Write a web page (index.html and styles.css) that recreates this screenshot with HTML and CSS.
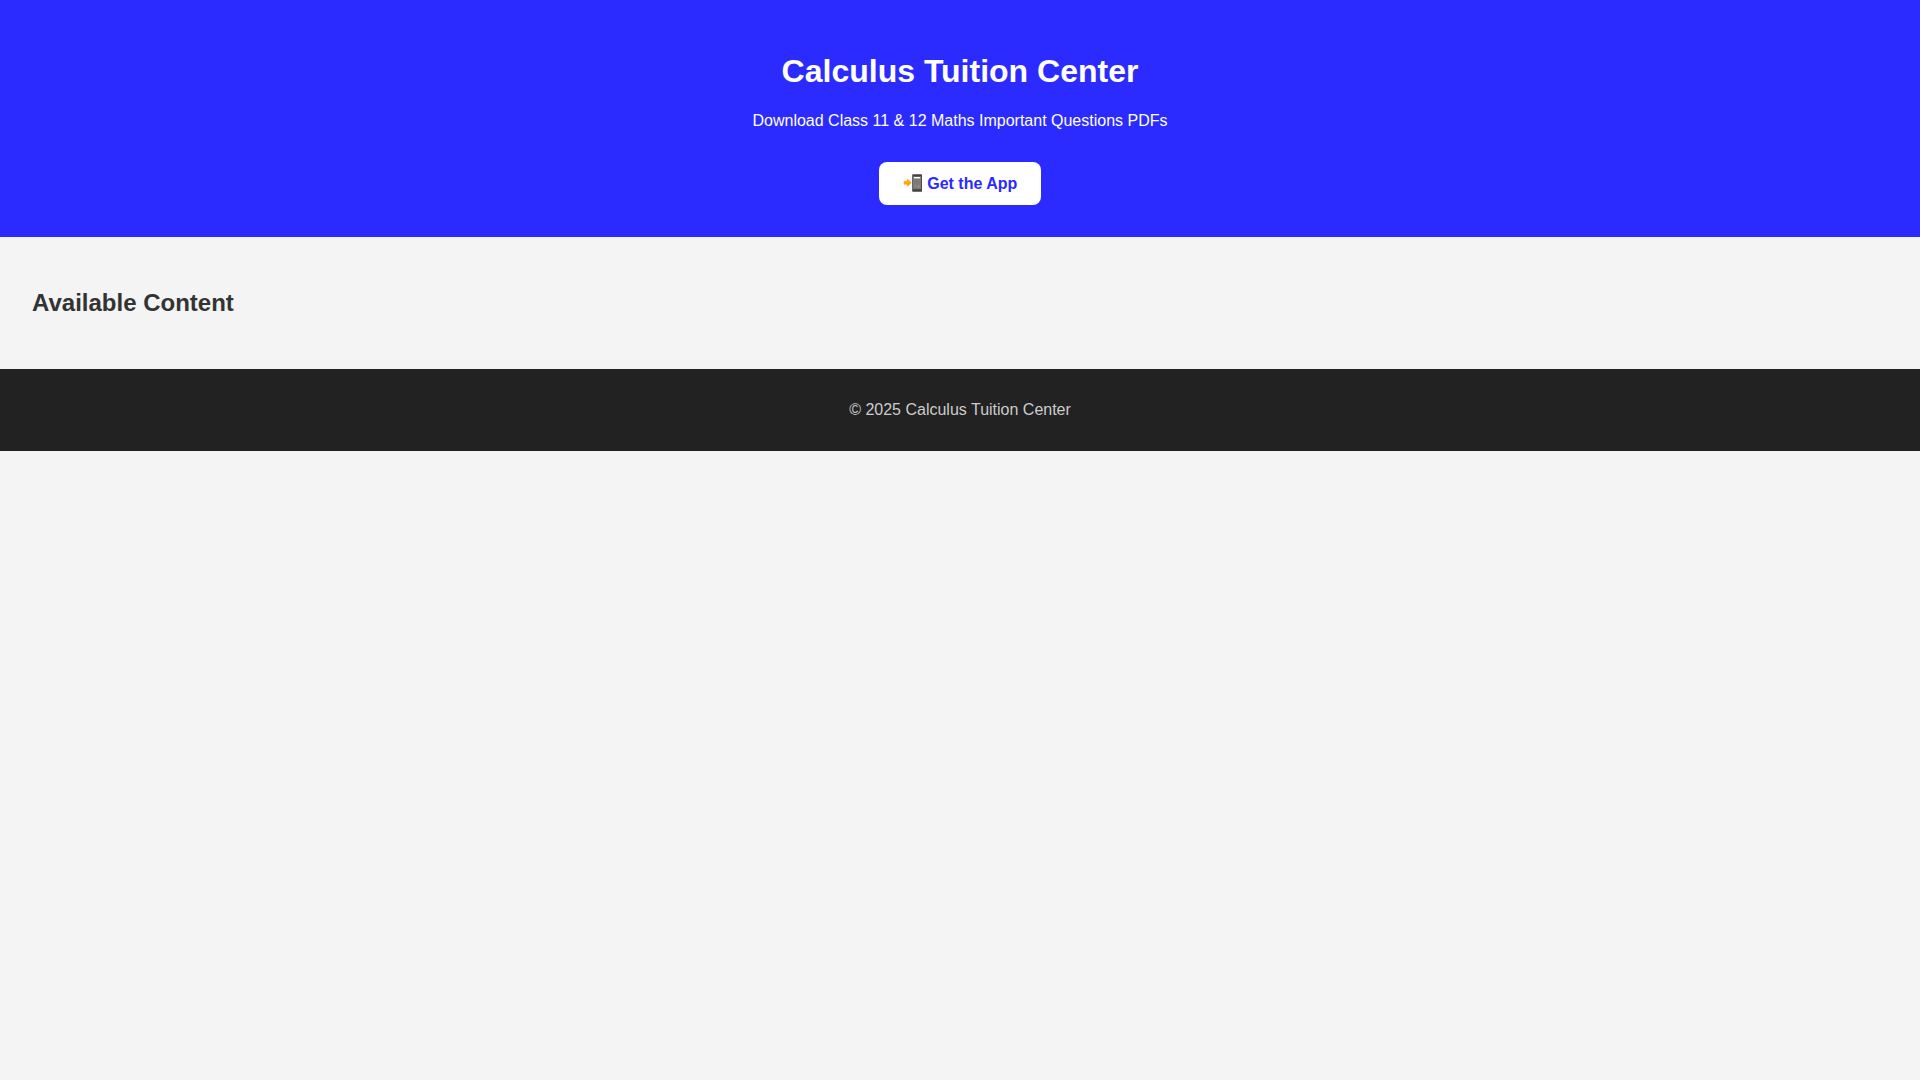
FILE: index.html
```html
<!DOCTYPE html>
<html lang="en">
<head>
  <meta charset="UTF-8">
  <meta name="viewport" content="width=device-width, initial-scale=1.0">
  <title>Calculus Tuition Center</title>
  <link rel="stylesheet" href="styles.css">
</head>
<body>
  <header class="hero">
    <h1>Calculus Tuition Center</h1>
    <p>Download Class 11 &amp; 12 Maths Important Questions PDFs</p>
    <a class="btn" href="#content">
      <svg class="btn-icon" viewBox="0 0 20 18" aria-hidden="true">
        <!-- arrow -->
        <path d="M1 7.2h3.4V5.1L8.4 8.8 4.4 12.4v-2.1H1z" fill="#ffa60a" stroke="#f59a00" stroke-width=".5" stroke-linejoin="round"/>
        <!-- phone -->
        <rect x="9.2" y="0.2" width="9.8" height="17.6" rx="0.9" fill="#424242"/>
        <rect x="10" y="2.4" width="8.2" height="12.8" fill="#7b7b7b"/>
        <rect x="11" y="3" width="6.2" height="1.4" fill="#fff"/>
        <circle cx="12.2" cy="11.7" r=".8" fill="#4e9bd6"/>
        <circle cx="14" cy="10.8" r=".8" fill="#e0564a"/>
        <circle cx="16.4" cy="10.9" r=".8" fill="#e05a4a"/>
        <circle cx="13" cy="13.2" r=".8" fill="#4caf6a"/>
        <circle cx="15.4" cy="12.6" r=".8" fill="#dca044"/>
      </svg>
      Get the App
    </a>
  </header>

  <section class="content" id="content">
    <h2>Available Content</h2>
  </section>

  <footer class="footer">
    <p>© 2025 Calculus Tuition Center</p>
  </footer>
</body>
</html>
```
FILE: styles.css
```css
body {
  margin: 0;
  font-family: "Liberation Sans", Arial, sans-serif;
  background: #f4f4f4;
  color: #333;
}
.hero {
  background: #2b2bff;
  color: white;
  padding: 32px;
  text-align: center;
}
.btn {
  display: inline-block;
  margin-top: 16px;
  padding: 12px 24px;
  background: white;
  color: #2b2bff;
  font-weight: bold;
  line-height: 19px;
  text-decoration: none;
  border-radius: 8px;
}
.btn-icon {
  width: 20px;
  height: 18px;
  vertical-align: -3px;
}
.content {
  padding: 32px;
}
.footer {
  background: #222;
  color: #ccc;
  padding: 16px;
  text-align: center;
}
```
